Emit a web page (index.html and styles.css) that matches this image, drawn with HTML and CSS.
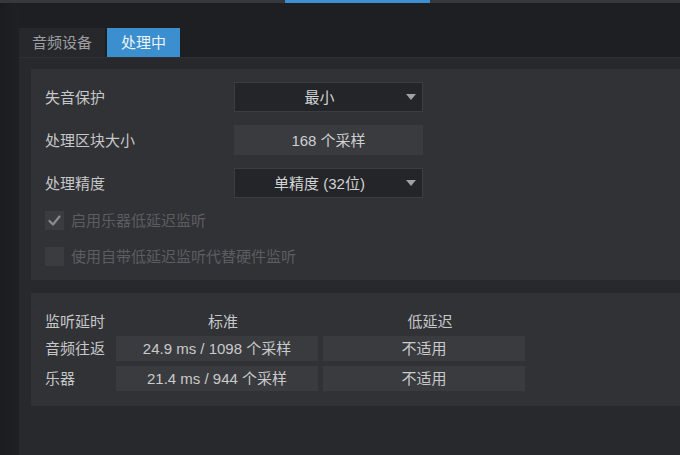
FILE: index.html
```html
<!DOCTYPE html>
<html lang="zh-CN">
<head>
    <meta charset="UTF-8">
    <meta name="viewport" content="width=device-width, initial-scale=1.0">
    <title>音频设置 - 处理中</title>
    <link rel="stylesheet" href="styles.css">
</head>
<body>
    <div class="top-bar">
        <span class="top-bar-active"></span>
    </div>

    <div class="page">
        <div class="tabs">
            <div class="tab">音频设备</div>
            <div class="tab active">处理中</div>
        </div>

        <div class="tab-body">
            <div class="panel settings">
                <div class="field">
                    <div class="field-label">失音保护</div>
                    <div class="select">
                        <span class="select-value">最小</span>
                        <span class="select-arrow"></span>
                    </div>
                </div>
                <div class="field">
                    <div class="field-label">处理区块大小</div>
                    <div class="value-box">168 个采样</div>
                </div>
                <div class="field">
                    <div class="field-label">处理精度</div>
                    <div class="select">
                        <span class="select-value">单精度 (32位)</span>
                        <span class="select-arrow"></span>
                    </div>
                </div>

                <label class="check disabled">
                    <span class="check-box">
                        <svg width="19" height="19" viewBox="0 0 19 19">
                            <polyline points="4.5,10 8,13.5 14.5,5.5" fill="none" stroke="#8b8c8f" stroke-width="2.2" stroke-linecap="round" stroke-linejoin="round"/>
                        </svg>
                    </span>
                    <span class="check-text">启用乐器低延迟监听</span>
                </label>
                <label class="check disabled">
                    <span class="check-box"></span>
                    <span class="check-text">使用自带低延迟监听代替硬件监听</span>
                </label>
            </div>

            <div class="panel latency">
                <div class="latency-head">
                    <div class="latency-label">监听延时</div>
                    <div class="latency-col">标准</div>
                    <div class="latency-col">低延迟</div>
                </div>
                <div class="latency-row">
                    <div class="latency-label">音频往返</div>
                    <div class="cell">24.9 ms / 1098 个采样</div>
                    <div class="cell">不适用</div>
                </div>
                <div class="latency-row">
                    <div class="latency-label">乐器</div>
                    <div class="cell">21.4 ms / 944 个采样</div>
                    <div class="cell">不适用</div>
                </div>
            </div>
        </div>
    </div>
</body>
</html>
```

FILE: styles.css
```css
* {
    margin: 0;
    padding: 0;
    box-sizing: border-box;
}

html, body {
    height: 100%;
}

body {
    font-family: "Liberation Sans", "Noto Sans CJK SC", sans-serif;
    font-size: 15px;
    color: #c6c7c9;
    background: #1e1f22;
    display: flex;
    flex-direction: column;
    overflow: hidden;
}

/* thin strip at the very top */
.top-bar {
    height: 3px;
    background: #36383b;
    padding-left: 285px;
    display: flex;
}

.top-bar-active {
    width: 145px;
    background: #3c8fd0;
}

.page {
    flex: 1;
    display: flex;
    flex-direction: column;
    padding: 25px 0 0 19px;
    background: linear-gradient(90deg, #1b1c1f 0, #1f2023 17px, #1e1f22 19px);
}

/* tabs */
.tabs {
    display: flex;
    gap: 2px;
    height: 29px;
}

.tab {
    width: 86px;
    display: flex;
    align-items: center;
    justify-content: center;
    background: #27282b;
    color: #9d9ea1;
    line-height: 1;
}

.tab.active {
    width: 73px;
    background: #3b8fcf;
    color: #eef3f8;
}

.tab-body {
    flex: 1;
    background: #28292c;
    border-top: 1px solid #2f3034;
    padding: 11px 0 0 12px;
    display: flex;
    flex-direction: column;
    gap: 13px;
}

.panel {
    background: #313235;
    padding-left: 14px;
}

/* processing settings */
.settings {
    padding-top: 13px;
    padding-bottom: 14px;
}

.field {
    display: flex;
    align-items: center;
    height: 30px;
    margin-bottom: 13px;
}

.field-label {
    width: 189px;
    line-height: 1;
}

.select,
.value-box {
    width: 189px;
    height: 30px;
    display: flex;
    align-items: center;
    justify-content: center;
    line-height: 1;
    position: relative;
}

.select {
    background: #242528;
    border: 1px solid #3c3d41;
    padding-right: 18px;
}

.value-box {
    background: #3a3b3e;
    color: #cfd0d2;
}

.select-value {
    color: #d2d3d5;
}

.select-arrow {
    position: absolute;
    right: 6px;
    top: 11px;
    width: 0;
    height: 0;
    border-left: 5px solid transparent;
    border-right: 5px solid transparent;
    border-top: 6px solid #a0a1a4;
}

.check {
    display: flex;
    align-items: center;
    gap: 7px;
    height: 19px;
    margin-top: 1px;
}

.check + .check {
    margin-top: 17px;
}

.check-box {
    width: 19px;
    height: 19px;
    background: #3b3c40;
    display: flex;
}

.check-text {
    line-height: 1;
}

.check.disabled .check-text {
    color: #5c5d61;
}

/* latency table */
.latency {
    padding-top: 15px;
    padding-bottom: 15px;
}

.latency-head,
.latency-row {
    display: flex;
    align-items: center;
    gap: 5px;
}

.latency-head {
    height: 27px;
    margin-bottom: 1px;
}

.latency-row {
    height: 25px;
}

.latency-row + .latency-row {
    margin-top: 5px;
}

.latency-label {
    width: 66px;
    line-height: 1;
}

.latency-col {
    width: 202px;
    text-align: center;
    padding-left: 12px;
    line-height: 1;
}

.cell {
    width: 202px;
    height: 25px;
    background: #3a3b3e;
    display: flex;
    align-items: center;
    justify-content: center;
    line-height: 1;
    color: #c9cacc;
}
```
